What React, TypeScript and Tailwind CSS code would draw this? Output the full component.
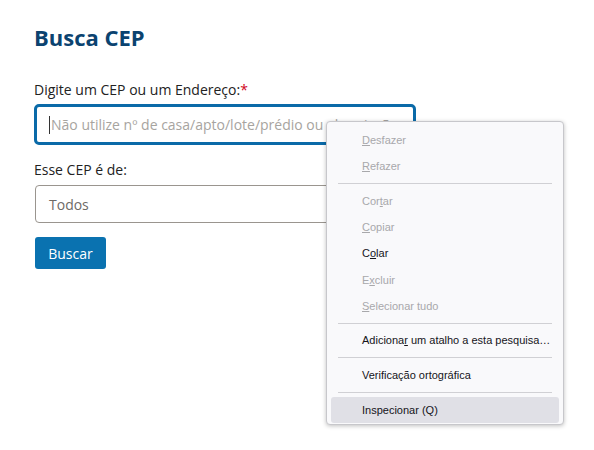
import React from "react";

const Item: React.FC<{ label: React.ReactNode; disabled?: boolean; active?: boolean }> = ({ label, disabled, active }) => (
  <div
    className={`h-[26.25px] flex items-center pl-[31px] mx-[4px] rounded-[3px] ${active ? "bg-[#e0e0e6]" : ""} ${
      disabled ? "text-[#a8a8ab]" : "text-[#15141a]"
    }`}
  >
    <span className="whitespace-nowrap">{label}</span>
  </div>
);

const Sep = () => <div className="h-px bg-[#d0d0d4] mx-[11px] my-[3.7px]" />;

export default function App() {
  return (
    <div className="relative w-[594px] h-[450px] bg-white overflow-hidden" style={{ fontFamily: '"Open Sans", sans-serif' }}>
      <div className="pl-[34px] pt-[21px] w-[416px]">
        <h1 className="text-[22px] font-bold text-[#0b4370] leading-[32px]">Busca CEP</h1>
        <label className="block mt-[27px] text-[14px] text-[#222] leading-[20px]">
          Digite um CEP ou um Endereço:<span className="text-[#d0021b]">*</span>
        </label>
        <div className="mt-[4px] h-[41px] border-[3px] border-[#0a6aa8] rounded-[5px] flex items-center pl-[12px] text-[14px] text-[#a7a4a0]">
          <span className="w-px h-[18px] bg-[#333] mr-[1px]" />
          <span className="whitespace-nowrap overflow-hidden">Não utilize nº de casa/apto/lote/prédio ou abreviação</span>
        </div>
        <label className="block mt-[15px] text-[14px] text-[#222] leading-[20px]">Esse CEP é de:</label>
        <div className="mt-[5px] ml-[1px] h-[38px] border border-[#9a958f] rounded-[4px] flex items-center pl-[13px] text-[14px] text-[#6d6a66]">
          Todos
        </div>
        <button className="mt-[14px] ml-[1px] w-[71px] h-[32px] bg-[#0a72b0] rounded-[3px] text-white text-[14px]">
          Buscar
        </button>
      </div>

      <div
        className="absolute left-[326px] top-[121px] w-[238px] h-[304px] bg-[#f9f9fb] border border-[#c7c7cb] rounded-[4px] shadow-[0_1px_4px_rgba(0,0,0,0.25)] pt-[5px] text-[11px]"
        style={{ fontFamily: '"Liberation Sans", sans-serif' }}
      >
        <Item disabled label={<><u>D</u>esfazer</>} />
        <Item disabled label={<><u>R</u>efazer</>} />
        <Sep />
        <Item disabled label={<>Cor<u>t</u>ar</>} />
        <Item disabled label={<><u>C</u>opiar</>} />
        <Item label={<>C<u>o</u>lar</>} />
        <Item disabled label={<>E<u>x</u>cluir</>} />
        <Item disabled label={<><u>S</u>elecionar tudo</>} />
        <Sep />
        <Item label={<>Adiciona<u>r</u> um atalho a esta pesquisa…</>} />
        <Sep />
        <Item label={<>Verificação ortográfica</>} />
        <Sep />
        <Item active label={<>Inspecionar (Q)</>} />
      </div>
    </div>
  );
}
